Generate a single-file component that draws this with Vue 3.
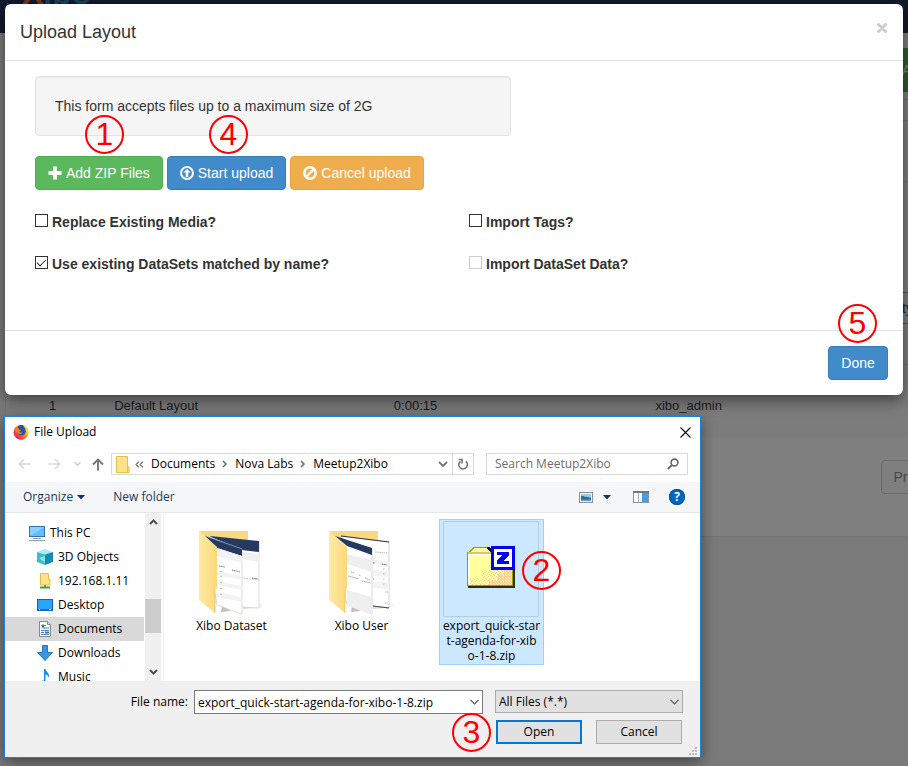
<script setup>
import { ref } from 'vue'

const replaceMedia = ref(false)
const importTags = ref(false)
const useDataSets = ref(true)
const importData = ref(false)

const places = [
  { name: 'This PC', icon: 'pc', root: true },
  { name: '3D Objects', icon: 'cube' },
  { name: '192.168.1.11', icon: 'net' },
  { name: 'Desktop', icon: 'desktop' },
  { name: 'Documents', icon: 'doc', selected: true },
  { name: 'Downloads', icon: 'down' },
  { name: 'Music', icon: 'music' },
]

const fileName = ref('export_quick-start-agenda-for-xibo-1-8.zip')
const fileType = ref('All Files (*.*)')
</script>

<template>
  <div class="page">
    <div class="backdrop">
      <header class="nav"><span class="logo"><span class="logo-x">X</span>ibo</span></header>
      <main class="panel">
        <div class="actions"><button class="add" type="button">Av</button></div>
        <div class="filters">
          <div class="rule r1"></div>
          <div class="rule r2"></div>
          <div class="rule r3"></div>
          <div class="field">ty</div>
          <div class="rule r4"></div>
        </div>
        <table class="layouts">
          <tbody>
            <tr><td class="c-id">1</td><td class="c-name">Default Layout</td><td class="c-time">0:00:15</td><td>xibo_admin</td></tr>
          </tbody>
        </table>
        <div class="pager"><button class="prev" type="button">Previous</button></div>
      </main>
    </div>

    <section class="modal" aria-label="Upload Layout">
      <header class="modal-head">
        <h4>Upload Layout</h4>
        <button class="close" type="button" aria-label="Close">
          <svg width="10" height="10" viewBox="0 0 10 10"><path d="M1.5 1.5l7 7M8.500 1.500l-7 7" stroke="#ccc" stroke-width="3" stroke-linecap="round" /></svg>
        </button>
      </header>
      <div class="modal-body">
        <div class="well">This form accepts files up to a maximum size of 2G</div>
        <div class="buttons">
          <div class="anchor">
            <button class="btn green" type="button">
              <svg width="14" height="14" viewBox="0 0 14 14"><path d="M5 .5h4v4.500h4.500v4H9v4.500H5V9H.5V5H5z" fill="#fff" /></svg>
              Add ZIP Files
            </button>
            <span class="callout over over-first">1</span>
          </div>
          <div class="anchor">
            <button class="btn blue" type="button">
              <svg width="14" height="14" viewBox="0 0 14 14"><circle cx="7" cy="7" r="5.900" fill="none" stroke="#fff" stroke-width="2" /><path d="M7 2.800l3.500 3.700H8.300v4.400H5.700V6.500H3.500z" fill="#fff" /></svg>
              Start upload
            </button>
            <span class="callout over">4</span>
          </div>
          <button class="btn orange" type="button">
            <svg width="14" height="14" viewBox="0 0 14 14"><circle cx="7" cy="7" r="5.700" fill="none" stroke="#fff" stroke-width="2.400" /><path d="M3.300 10.700l7.400-7.400" stroke="#fff" stroke-width="2.400" /></svg>
            Cancel upload
          </button>
        </div>
        <div class="checks">
          <label><input v-model="replaceMedia" type="checkbox" />Replace Existing Media?</label>
          <label><input v-model="importTags" type="checkbox" />Import Tags?</label>
          <label><input v-model="useDataSets" type="checkbox" />Use existing DataSets matched by name?</label>
          <label><input v-model="importData" type="checkbox" disabled />Import DataSet Data?</label>
        </div>
      </div>
      <footer class="modal-foot">
        <div class="anchor">
          <button class="btn blue done" type="button">Done</button>
          <span class="callout over over-done">5</span>
        </div>
      </footer>
    </section>

    <section class="dialog" aria-label="File Upload">
      <header class="titlebar">
        <svg width="16" height="16" viewBox="0 0 16 16">
          <defs>
            <linearGradient id="fox" x1="1" y1="0" x2="0" y2="1"><stop offset="0" stop-color="#ffe226" /><stop offset=".45" stop-color="#ff8a16" /><stop offset=".75" stop-color="#f5304a" /><stop offset="1" stop-color="#d0157c" /></linearGradient>
          </defs>
          <circle cx="8" cy="8.300" r="7.500" fill="url(#fox)" />
          <path d="M5 2.500C7 .6 10 .8 11 2.200c1.800 1.700 2.300 4.200 1.500 6.200-.8 2.300-3 3.400-5 2.900C5.200 10.800 4 9 4.500 6.500z" fill="#1f55b8" />
          <path d="M1 3l1.600 1.600L5.500 4l.7 1.700 2 .4-2 1.800c1 .8 2 .7 3.300.5-.9 1.900-3.600 2.300-5.200.7C2.500 7.500 3 5.500 1 3z" fill="#ff7a18" />
          <path d="M10.500.8c-.4 2 2.300 3 2.200 6 1.500 1.200.8 3.700-.6 4.900 3.500-1.200 4.300-6 1.700-8.500z" fill="#ffd91f" />
        </svg>
        <span class="title">File Upload</span>
        <button class="bare" type="button" aria-label="Close dialog">
          <svg width="11" height="11" viewBox="0 0 11 11"><path d="M.5.5l10 10M10.500.5l-10 10" stroke="#111" stroke-width="1.200" /></svg>
        </button>
      </header>

      <div class="navrow">
        <div class="arrows">
          <button class="bare" type="button" aria-label="Back"><svg width="13" height="12" viewBox="0 0 13 12"><path d="M12.500 6H1.200M6 1.200L1.200 6 6 10.800" fill="none" stroke="#d8d8d8" stroke-width="1.500" /></svg></button>
          <button class="bare" type="button" aria-label="Forward"><svg width="13" height="12" viewBox="0 0 13 12"><path d="M.5 6h11.300M7 1.200L11.800 6 7 10.800" fill="none" stroke="#d8d8d8" stroke-width="1.500" /></svg></button>
          <button class="bare recent" type="button" aria-label="Recent"><svg width="7" height="6" viewBox="0 0 7 6"><path d="M.5 1.200l3 3 3-3" fill="none" stroke="#cfcfcf" stroke-width="1.500" /></svg></button>
          <button class="bare" type="button" aria-label="Up"><svg width="12" height="13" viewBox="0 0 12 13"><path d="M6 12.500V1.500M1 6.500l5-5 5 5" fill="none" stroke="#757575" stroke-width="1.900" /></svg></button>
        </div>
        <div class="address">
          <svg class="folder" width="14" height="17" viewBox="0 0 14 17"><path d="M.5.5h11v10.300h1.500v5.700H.5z" fill="#ffe28b" stroke="#e7c04a" /><path d="M11.500 11v5" stroke="#e7c04a" /></svg>
          <svg class="dbl" width="9" height="7" viewBox="0 0 9 7"><path d="M4 .6L1 3.500l3 2.900M8 .6L5 3.500l3 2.900" fill="none" stroke="#666" stroke-width="1.100" /></svg>
          <a href="#">Documents</a>
          <svg class="sep" width="6" height="8" viewBox="0 0 6 8"><path d="M1 1l3 3-3 3" fill="none" stroke="#6b6b6b" stroke-width="1.500" /></svg>
          <a href="#">Nova Labs</a>
          <svg class="sep" width="6" height="8" viewBox="0 0 6 8"><path d="M1 1l3 3-3 3" fill="none" stroke="#6b6b6b" stroke-width="1.500" /></svg>
          <a href="#">Meetup2Xibo</a>
          <button class="bare drop" type="button" aria-label="Previous locations"><svg width="10" height="7" viewBox="0 0 10 7"><path d="M1 1l4 4 4-4" fill="none" stroke="#777" stroke-width="1.900" /></svg></button>
          <button class="bare refresh" type="button" aria-label="Refresh"><svg width="12" height="13" viewBox="0 0 12 13"><path d="M8.800 3.300A4.300 4.300 0 1 1 3.400 3.300" fill="none" stroke="#757575" stroke-width="1.600" /><path d="M1.500 1.500H5V5.500" fill="none" stroke="#757575" stroke-width="1.600" /></svg></button>
        </div>
        <div class="search">
          <input type="text" placeholder="Search Meetup2Xibo" aria-label="Search Meetup2Xibo" />
          <svg width="12" height="12" viewBox="0 0 12 12"><circle cx="7.500" cy="4.500" r="3.400" fill="none" stroke="#666" stroke-width="1.600" /><path d="M5 7L.8 11" stroke="#666" stroke-width="1.800" /></svg>
        </div>
      </div>

      <div class="toolbar">
        <button class="bare tool" type="button">Organize<svg width="8" height="5" viewBox="0 0 8 5"><path d="M0 0h8L4 4.500z" fill="#1b3258" /></svg></button>
        <button class="bare tool" type="button">New folder</button>
        <span class="grow"></span>
        <button class="bare view" type="button" aria-label="Change view">
          <svg width="14" height="11" viewBox="0 0 14 11"><rect x=".5" y=".5" width="13" height="10" fill="#fff" stroke="#8a9099" /><rect x="2" y="2" width="10" height="7" fill="#9ccbf5" /><path d="M2 4c2-1 3 1 5 .8S10 6 12 5.500V9H2z" fill="#2e7082" /><path d="M2 7.500h10V9H2z" fill="#5e9dd0" /></svg>
          <svg width="8" height="5" viewBox="0 0 8 5"><path d="M0 0h8L4 4.500z" fill="#1b3258" /></svg>
        </button>
        <button class="bare pane" type="button" aria-label="Preview pane">
          <svg width="16" height="12" viewBox="0 0 16 12"><rect x=".5" y=".5" width="15" height="11" fill="#fff" stroke="#8a9099" /><path d="M0 1h16" stroke="#6f7782" stroke-width="2" /><path d="M5.500 2v9.500" stroke="#a6acb4" /><rect x="9" y="2" width="6" height="9" fill="#3fa0ea" /></svg>
        </button>
        <button class="bare help" type="button" aria-label="Help">?</button>
      </div>

      <div class="content">
        <nav class="tree">
          <a v-for="p in places" :key="p.name" href="#" :class="{ root: p.root, selected: p.selected }">
            <svg v-if="p.icon === 'pc'" width="16" height="16" viewBox="0 0 16 16"><rect x=".5" y="1.500" width="15" height="10" fill="#62bdf8" stroke="#2c78ad" /><path d="M1 2h14L1 11z" fill="#8bd0fc" /><path d="M4 13.500h8M0 15.500h16" stroke="#8ca6b8" /></svg>
            <svg v-else-if="p.icon === 'cube'" width="16" height="16" viewBox="0 0 16 16"><path d="M0 3l8-3 8 3-8 2.500z" fill="#a5ecf3" /><path d="M0 3l8 2.500V16l-8-3z" fill="#38bccc" /><path d="M16 3L8 5.500V16l8-3z" fill="#168dac" /><path d="M2 9l6-2v7z" fill="#8ce2ec" /></svg>
            <svg v-else-if="p.icon === 'net'" width="16" height="16" viewBox="0 0 16 16"><path d="M3.500.5h8v6H13v5.500H3.500z" fill="#ffe28b" stroke="#e3bd4d" /><path d="M8 12v3M3 14.500h10" stroke="#3aa63a" stroke-width="1.800" /></svg>
            <svg v-else-if="p.icon === 'desktop'" width="16" height="16" viewBox="0 0 16 16"><rect x=".5" y="2.500" width="15" height="11" fill="#2ba5fb" stroke="#0d69b3" /><path d="M1 12.500h14" stroke="#0875cd" /><path d="M2 12.500h1M12 12.500h2" stroke="#fff" /></svg>
            <svg v-else-if="p.icon === 'doc'" width="16" height="16" viewBox="0 0 16 16"><path d="M2.500.5h8l3 3v12h-11z" fill="#fff" stroke="#858b91" /><path d="M10.500.5v3h3" fill="#ddd" stroke="#858b91" /><path d="M4 4.500h5M7 7h5M4 9.500h8M4 11.500h3M4 13.500h8" stroke="#4b8bbd" /><path d="M5 7.500l1-4 1 4" fill="none" stroke="#1a83c9" /><rect x="8" y="10.500" width="4" height="2" fill="#36729d" /></svg>
            <svg v-else-if="p.icon === 'down'" width="16" height="16" viewBox="0 0 16 16"><path d="M5.500.5h5v7h5L8 15.500.5 7.500h5z" fill="#3996e3" stroke="#2677bd" /></svg>
            <svg v-else width="16" height="16" viewBox="0 0 16 16"><path d="M7 0h1.500c.5 3 4.500 4 3.500 9-.5-2-1.500-3-3.500-3.500V13c0 3-5 3.500-5 1 0-2 2-2.700 3.500-2.300z" fill="#1492e6" /></svg>
            <span>{{ p.name }}</span>
          </a>
        </nav>
        <div class="scroll">
          <svg width="9" height="6" viewBox="0 0 9 6"><path d="M1 5l3.500-3.500L8 5" fill="none" stroke="#505050" stroke-width="2" /></svg>
          <span class="thumb"></span>
          <svg width="9" height="6" viewBox="0 0 9 6"><path d="M1 1l3.500 3.500L8 1" fill="none" stroke="#505050" stroke-width="2" /></svg>
        </div>
        <div class="files">
          <button class="file" type="button">
            <span class="thumbnail">
              <svg width="96" height="96" viewBox="0 0 96 96">
                <defs>
                  <linearGradient id="fold" x1="0" y1="0" x2="1" y2="0"><stop offset="0" stop-color="#ffe9a5" /><stop offset="1" stop-color="#fbd978" /></linearGradient>
                  <linearGradient id="shade" x1="0" y1="0" x2="1" y2="0"><stop offset="0" stop-color="#bbb" /><stop offset="1" stop-color="#fff" /></linearGradient>
                </defs>
                <path d="M60 88l17-1 7-4-10-1-14 3zM38 91l10-1-9-5z" fill="url(#shade)" />
                <path d="M16 10h49v60H16z" fill="#f8d982" />
                <path d="M26 15l50 6v66l-16-1-34-6z" fill="#fff" stroke="#c6c6c6" stroke-width=".6" />
                <path d="M27 15l49 5v11l-17-2-31-13z" fill="#263961" />
                <path d="M60 31l16 2v8l-16-3z" fill="#f0f0f1" />
                <path d="M60 57l16 2" stroke="#aaa" stroke-width=".6" stroke-dasharray="2 1" />
                <path d="M22 15l37 13v65l-25-9z" fill="#fff" stroke="#c4c4c4" stroke-width=".6" />
                <path d="M22 15l37 13v7l-25-8z" fill="#263961" />
                <path d="M22 15l37 13" stroke="#8791a8" stroke-width=".5" />
                <path d="M34 27l25 8v7l-25-7zM34 50l25 5v4l-25-5zM34 60l25 5v4l-25-5zM34 71l25 5v5l-25-5z" fill="#f3f3f4" />
                <path d="M36 45l6 1M49 49l8 2M69 57l6 1" stroke="#555" stroke-width=".8" stroke-dasharray="1.500 .7" />
                <path d="M37 50l2 1M37 55l2 1M37 61l2 1M37 67l2 1M37 73l2 1" stroke="#999" stroke-width=".7" />
                <path d="M16 10l18 16v41l-2 3v22L16 79z" fill="url(#fold)" />
                <path d="M32 69v23" stroke="#e8c162" stroke-width=".8" />
              </svg>
            </span>
            <span class="label">Xibo Dataset</span>
          </button>
          <button class="file" type="button">
            <span class="thumbnail">
              <svg width="96" height="96" viewBox="0 0 96 96">
                <path d="M60 88l17-1 7-4-10-1-14 3zM38 91l10-1-9-5z" fill="url(#shade)" />
                <path d="M16 10h49v60H16z" fill="#f8d982" />
                <path d="M28 15l48 6v66l-17-2-33-6z" fill="#fff" stroke="#bbb" stroke-width=".6" />
                <path d="M28 15l48 6" stroke="#333" stroke-width="1.200" />
                <path d="M60 85l16 2" stroke="#444" />
                <path d="M60 38l16 2v5l-16-2zM60 49l16 1v6l-16-1zM60 61l16 1v6l-16-1z" fill="#f3f3f3" />
                <path d="M60 42h2M69 43l5 1" stroke="#555" stroke-width=".9" stroke-dasharray="1.500 .7" />
                <path d="M62 31l12 1M70 48h2M70 53h2M70 58h2M70 63h2M72 71h3M72 82h3M60 58h2" stroke="#999" stroke-width=".7" stroke-dasharray="1.500 .7" />
                <path d="M22 15l37 13v65l-25-9z" fill="#fff" stroke="#c4c4c4" stroke-width=".6" />
                <path d="M22 15l37 12v7l-25-9z" fill="#263961" />
                <path d="M34 33l25 6v12l-25-8zM34 69l25 7v17l-25-8z" fill="#efeff0" />
                <path d="M38 51l3 1M46 54l2 1M52 57l5 2M35 55l11 3M49 60l9 2" stroke="#777" stroke-width=".7" stroke-dasharray="1.500 .7" />
                <path d="M16 10l18 16v41l-2 3v22L16 79z" fill="url(#fold)" />
                <path d="M32 69v23" stroke="#e8c162" stroke-width=".8" />
              </svg>
            </span>
            <span class="label">Xibo User</span>
          </button>
          <div class="anchor">
            <button class="file picked" type="button">
              <span class="thumbnail">
                <svg width="48" height="48" viewBox="0 0 48 48" shape-rendering="crispEdges">
                  <defs>
                    <pattern id="dither" width="4" height="4" patternUnits="userSpaceOnUse"><rect width="4" height="4" fill="#ffff9c" /><path d="M0 0h1v1H0zM2 1h1v1H2zM1 3h1v1H1zM3 2h1v1H3z" fill="#ffce9c" /></pattern>
                    <pattern id="dense" width="3" height="3" patternUnits="userSpaceOnUse"><rect width="3" height="3" fill="#ffce9c" /><path d="M0 0h1v1H0zM2 2h1v1H2z" fill="#ffff9c" /></pattern>
                  </defs>
                  <path d="M2 41h44V12h2v31H2z" fill="#313100" />
                  <path d="M1 41h45v2H1z" fill="#313100" />
                  <path d="M0 7h2l4-5h16l5 5h19v34H0z" fill="#9c9c00" />
                  <path d="M19 3l5 4h3l-4-5h-3z" fill="#111" />
                  <path d="M3 7l4-4h12l4 4z" fill="#ffff9c" />
                  <path d="M1 7h44v2H1z" fill="#cece63" />
                  <path d="M1 9h44v31H1z" fill="#ffff9c" />
                  <path d="M45 20v20H3v-7h11v-7h8v-6z" fill="url(#dither)" />
                  <path d="M45 24v16H22v-5h9v-6h6v-5z" fill="url(#dense)" />
                  <path d="M1 9h2v31H1zM1 9h23v1H1z" fill="#fff" />
                  <path d="M24 1h24v24H24z" fill="#00f" />
                  <path d="M27 4h18v18H27z" fill="#fff" />
                  <path d="M30 7h12v3l-5 6h5v3H30v-3l5-6h-5z" fill="#00f" />
                </svg>
              </span>
              <span class="label">export_quick-star<br />t-agenda-for-xib<br />o-1-8.zip</span>
            </button>
            <span class="callout on-file">2</span>
          </div>
        </div>
      </div>

      <footer class="dialog-foot">
        <label class="name-label" for="fname">File name:</label>
        <div class="combo">
          <input id="fname" v-model="fileName" type="text" />
          <svg width="9" height="6" viewBox="0 0 9 6"><path d="M.5.8l4 4 4-4" fill="none" stroke="#555" stroke-width="1.200" /></svg>
        </div>
        <div class="combo type-combo">
          <select v-model="fileType" aria-label="File type"><option>All Files (*.*)</option></select>
          <svg width="9" height="6" viewBox="0 0 9 6"><path d="M.5.8l4 4 4-4" fill="none" stroke="#555" stroke-width="1.200" /></svg>
        </div>
        <div class="confirm">
          <div class="anchor">
            <button class="win primary" type="button">Open</button>
            <span class="callout before-open">3</span>
          </div>
          <button class="win" type="button">Cancel</button>
        </div>
        <svg class="grip" width="8" height="8" viewBox="0 0 8 8"><path d="M6 0h2v2H6zM3 3h2v2H3zM6 3h2v2H6zM0 6h2v2H0zM3 6h2v2H3zM6 6h2v2H6z" fill="#bdbdbd" /></svg>
      </footer>
    </section>
  </div>
</template>

<style>
body { margin: 0; background: #7a7a7a; }
</style>

<style scoped>
* { box-sizing: border-box; }
svg { display: block; flex: none; }
button, input, select { font: inherit; color: inherit; margin: 0; }

.page {
  position: relative;
  min-height: 100vh;
  overflow: hidden;
  display: flow-root;
  font: 14px/20px "Liberation Sans", Arial, sans-serif;
  color: #333;
}

/* Dimmed page behind the dialogs */
.backdrop { position: absolute; inset: 0; background: #7a7a7a; }
.nav { height: 33px; background: #121a2c; overflow: hidden; padding-left: 22px; }
.logo { display: block; margin-top: -23px; font-size: 32px; line-height: 32px; font-weight: bold; color: #17435f; }
.logo-x { color: #7e3521; }
.panel { height: 504px; margin-left: 5px; background: #7f7f7f; border-left: 1px solid #747474; border-bottom: 1px solid #737373; }
.actions { display: flex; justify-content: flex-end; padding-top: 15px; }
.add { width: 10px; height: 44px; padding: 0 0 0 4px; border: 0; background: #2e5d2e; color: #7f7f7f; text-align: left; overflow: hidden; }
.filters { height: 298px; padding-top: 7px; display: flex; flex-direction: column; align-items: stretch; }
.rule { border-top: 1px solid #6d6d6d; }
.r1 { height: 21px; }
.r2 { height: 61px; }
.r3 { height: 111px; }
.field { align-self: flex-end; width: 10px; height: 32px; padding: 5px 0 0 3px; border: 1px solid #555; border-right: 0; color: #222; overflow: hidden; }
.r4 { margin-top: 40px; }
.layouts { width: 100%; height: 47px; border-collapse: collapse; background: #7c7c7c; font-size: 13px; line-height: 18px; color: #1b1b1b; }
.layouts td { padding: 7px 0 0; vertical-align: top; }
.layouts .c-id { width: 12%; padding-left: 43px; }
.layouts .c-name { width: 31%; }
.layouts .c-time { width: 29%; }
.pager { display: flex; justify-content: flex-end; padding-top: 23px; margin-right: -53px; }
.prev { height: 34px; padding: 0 12px; background: none; border: 1px solid #6c6c6c; border-radius: 4px; color: #474747; }

/* Upload form */
.modal {
  position: relative;
  margin: 4px 5px 0;
  background: #fff;
  border-radius: 6px;
  box-shadow: 0 5px 15px rgba(0, 0, 0, .5);
}
.modal-head { display: flex; align-items: flex-start; justify-content: space-between; padding: 15px; border-bottom: 1px solid #e5e5e5; }
.modal-head h4 { margin: 0; font-size: 18px; line-height: 26px; font-weight: normal; }
.close { padding: 4px 1px; background: none; border: 0; }
.modal-body { padding: 15px 30px 56px; }
.well {
  width: calc((100% + 30px) * 7 / 12 - 30px);
  padding: 19px;
  border: 1px solid #e3e3e3;
  border-radius: 4px;
  background: #f5f5f5;
  box-shadow: inset 0 1px 1px rgba(0, 0, 0, .05);
}
.buttons { display: flex; gap: 4px; margin-top: 20px; }
.anchor { position: relative; }
.btn {
  display: flex;
  align-items: center;
  justify-content: center;
  gap: 4px;
  height: 34px;
  padding: 0 12px;
  border: 1px solid;
  border-radius: 4px;
  color: #fff;
  white-space: nowrap;
}
.done { min-width: 60px; }
.green { background: #5cb85c; border-color: #4cae4c; }
.blue { background: #428bca; border-color: #357ebd; }
.orange { background: #f0ad4e; border-color: #eea236; }
.checks { display: grid; grid-template-columns: 1fr 1fr; column-gap: 30px; row-gap: 22px; margin-top: 22px; }
.checks label { display: flex; gap: 4px; font-weight: bold; }
.checks input { appearance: none; width: 13px; height: 13px; margin-top: 2px; border: 1px solid #333; background: #fff; flex: none; }
.checks input:checked::after { content: ""; display: block; width: 8px; height: 4px; margin: 2px 0 0 1px; border-left: 1px solid #333; border-bottom: 1px solid #333; transform: rotate(-45deg); }
.checks input:disabled { border-color: #ccc; }
.modal-foot { display: flex; justify-content: flex-end; padding: 15px; border-top: 1px solid #e5e5e5; }

/* Numbered callouts */
.callout {
  position: absolute;
  z-index: 2;
  width: 39px;
  height: 39px;
  border: 2px solid #f00;
  border-radius: 50%;
  color: #f00;
  font: 32px/35px "Liberation Sans", Arial, sans-serif;
  text-align: center;
}
.over { left: 42px; top: -41px; }
.over-first { left: 50px; }
.over-done { left: 10px; top: -42px; }
.on-file { left: 83px; top: 32px; }
.before-open { left: -44px; top: -7px; }

/* File chooser */
.dialog {
  position: relative;
  margin: 21px 207px 8px 4px;
  border: 1px solid #1883d7;
  background: #fff;
  box-shadow: 0 4px 14px rgba(0, 0, 0, .45);
  font: 12px/16px "Open Sans", "Noto Sans", sans-serif;
  color: #000;
}
.bare { display: flex; align-items: center; padding: 0; border: 0; background: none; }
.titlebar { display: flex; align-items: center; gap: 5px; height: 30px; padding: 0 9px 0 8px; }
.title { flex: 1; }
.navrow { display: grid; grid-template-columns: 93px 363fr 214fr; align-items: center; padding: 6px 12px 7px 13px; }
.arrows { display: flex; align-items: center; gap: 17px; }
.recent { margin: 0 -6px 0 -4px; }
.address, .search { display: flex; align-items: center; height: 22px; min-width: 0; border: 1px solid #d9d9d9; }
.address { padding-left: 4px; }
.address a { color: #000; text-decoration: none; white-space: nowrap; }
.dbl { margin: 0 7px 0 5px; }
.sep { margin: 0 7px; }
.drop { margin-left: auto; padding-right: 4px; }
.refresh { align-self: stretch; width: 21px; justify-content: center; border-left: 1px solid #d9d9d9; }
.search { margin-left: 12px; padding: 0 8px; }
.search input { flex: 1; min-width: 0; padding: 0; border: 0; outline: 0; background: none; }
.search input::placeholder { color: #6d6d6d; opacity: 1; }
.toolbar { display: flex; align-items: center; height: 31px; padding: 0 15px 0 18px; background: #f5f6f7; border-bottom: 1px solid #e5e7ea; color: #1e395b; }
.tool { gap: 4px; margin-right: 28px; }
.grow { flex: 1; }
.view { gap: 10px; }
.pane { margin: 0 20px 0 22px; }
.help { width: 16px; height: 16px; justify-content: center; border-radius: 50%; background: #0066c4; color: #fff; font-weight: bold; box-shadow: inset 0 0 0 1px #124f8c; }
.content { display: flex; height: 168px; overflow: hidden; }
.tree { width: 139px; padding-top: 8px; flex: none; }
.tree a { display: flex; align-items: center; gap: 5px; height: 24px; padding-left: 32px; color: #000; text-decoration: none; }
.tree .root { padding-left: 24px; }
.tree .selected { background: #d9d9d9; }
.scroll { display: flex; flex-direction: column; align-items: center; justify-content: space-between; width: 16px; margin-left: 1px; padding: 6px 0; background: #f0f0f0; flex: none; }
.thumb { width: 16px; height: 34px; margin-top: 38px; background: #cdcdcd; }
.files { display: flex; align-items: flex-start; gap: 25px; padding: 6px 0 0 15px; margin-left: 2px; border-left: 1px solid #f2f2f2; }
.file { display: block; width: 105px; padding: 1px 3px; border: 1px solid transparent; background: none; text-align: center; line-height: 15px; }
.picked { background: #cce8ff; border-color: #99d1ff; }
.thumbnail { display: flex; align-items: center; justify-content: center; width: 96px; height: 96px; }
.picked .thumbnail { border: 1px solid #b5cde0; border-radius: 1px; }
.label { display: block; margin: 1px -3px 0; white-space: nowrap; }
.dialog-foot {
  position: relative;
  display: grid;
  grid-template-columns: 183px 289fr 194fr;
  column-gap: 6px;
  row-gap: 6px;
  padding: 9px 17px 13px 0;
  background: #f0f0f0;
}
.name-label { text-align: right; line-height: 24px; }
.combo { display: grid; align-items: center; height: 24px; min-width: 0; }
.combo > * { grid-area: 1 / 1; }
.combo svg { justify-self: end; margin-right: 4px; pointer-events: none; }
.combo input, .combo select { width: 100%; height: 100%; min-width: 0; padding: 0 3px; border: 1px solid #7a7a7a; border-radius: 0; background: #fff; appearance: none; outline: 0; }
.type-combo { margin-left: 6px; height: 23px; }
.combo select { background: #e1e1e1; border-color: #adadad; }
.confirm { grid-column: 3; display: flex; justify-content: flex-end; gap: 14px; padding-right: 1px; }
.win { width: 86px; height: 24px; padding: 0; border: 1px solid #adadad; background: #e1e1e1; }
.primary { border: 2px solid #0078d7; }
.grip { position: absolute; right: 3px; bottom: 2px; }
</style>
